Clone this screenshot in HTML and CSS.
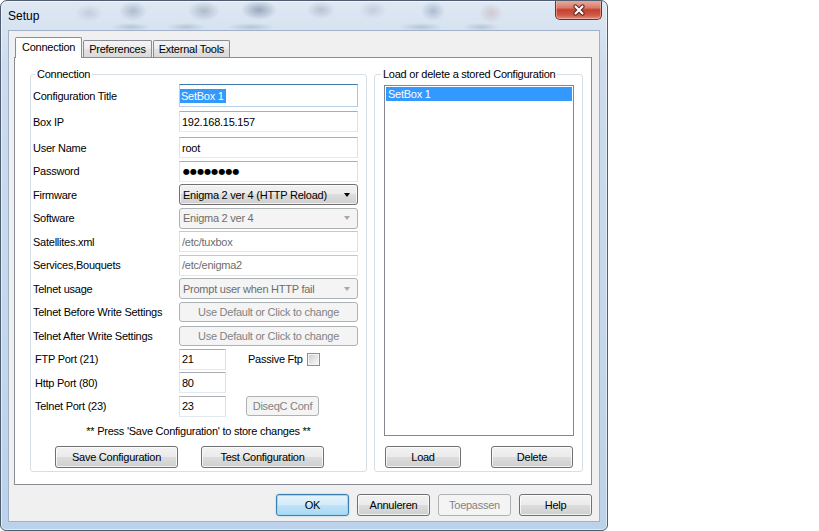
FILE: index.html
```html
<!DOCTYPE html>
<html lang="en">
<head>
    <meta charset="UTF-8">
    <meta name="viewport" content="width=device-width, initial-scale=1.0">
    <title>Setup</title>
    <link rel="stylesheet" href="styles.css">
</head>
<body>
    <div class="window">
        <div class="titlebar">
            <span class="title">Setup</span>
            <div class="close-btn">
                <svg width="14" height="12" viewBox="0 0 14 12">
                    <path d="M3.5 2.5 L10.5 9.5 M10.5 2.5 L3.5 9.5" stroke="#5a2620" stroke-width="4.2" stroke-linecap="round"/>
                    <path d="M3.5 2.5 L10.5 9.5 M10.5 2.5 L3.5 9.5" stroke="#fff" stroke-width="2.2" stroke-linecap="round"/>
                </svg>
            </div>
        </div>

        <div class="client">
            <div class="tabs">
                <div class="tab active">Connection</div>
                <div class="tab">Preferences</div>
                <div class="tab">External Tools</div>
            </div>

            <div class="tab-panel">
                <!-- left: connection settings -->
                <fieldset class="group group-left">
                    <legend>Connection</legend>

                    <div class="row row-first">
                        <label>Configuration Title</label>
                        <div class="textbox focused"><span class="sel">SetBox 1</span></div>
                    </div>
                    <div class="row row-second">
                        <label>Box IP</label>
                        <div class="textbox">192.168.15.157</div>
                    </div>
                    <div class="row">
                        <label>User Name</label>
                        <div class="textbox">root</div>
                    </div>
                    <div class="row">
                        <label>Password</label>
                        <div class="textbox password">●●●●●●●●</div>
                    </div>
                    <div class="row">
                        <label>Firmware</label>
                        <div class="combo">Enigma 2 ver 4 (HTTP Reload)</div>
                    </div>
                    <div class="row">
                        <label>Software</label>
                        <div class="combo disabled">Enigma 2 ver 4</div>
                    </div>
                    <div class="row">
                        <label>Satellites.xml</label>
                        <div class="textbox disabled">/etc/tuxbox</div>
                    </div>
                    <div class="row">
                        <label>Services,Bouquets</label>
                        <div class="textbox disabled">/etc/enigma2</div>
                    </div>
                    <div class="row">
                        <label>Telnet usage</label>
                        <div class="combo disabled">Prompt user when HTTP fail</div>
                    </div>
                    <div class="row">
                        <label>Telnet Before Write Settings</label>
                        <div class="btn disabled wide">Use Default or Click to change</div>
                    </div>
                    <div class="row">
                        <label>Telnet After Write Settings</label>
                        <div class="btn disabled wide">Use Default or Click to change</div>
                    </div>
                    <div class="row">
                        <label class="port-label">FTP Port (21)</label>
                        <div class="textbox port">21</div>
                        <span class="passive">Passive Ftp</span>
                        <span class="checkbox"></span>
                    </div>
                    <div class="row">
                        <label class="port-label">Http Port (80)</label>
                        <div class="textbox port">80</div>
                    </div>
                    <div class="row">
                        <label class="port-label">Telnet Port (23)</label>
                        <div class="textbox port">23</div>
                        <div class="btn disabled diseqc">DiseqC Conf</div>
                    </div>

                    <p class="note">** Press 'Save Configuration' to store changes **</p>

                    <div class="group-buttons">
                        <div class="btn cfg-btn">Save Configuration</div>
                        <div class="btn cfg-btn">Test Configuration</div>
                    </div>
                </fieldset>

                <!-- right: stored configurations -->
                <fieldset class="group group-right">
                    <legend>Load or delete a stored Configuration</legend>
                    <div class="listbox">
                        <div class="list-item selected">SetBox 1</div>
                    </div>
                    <div class="list-buttons">
                        <div class="btn load-btn">Load</div>
                        <div class="btn delete-btn">Delete</div>
                    </div>
                </fieldset>
            </div>

            <div class="footer">
                <div class="btn dlg-btn default">OK</div>
                <div class="btn dlg-btn">Annuleren</div>
                <div class="btn dlg-btn disabled">Toepassen</div>
                <div class="btn dlg-btn">Help</div>
            </div>
        </div>
    </div>
</body>
</html>
```

FILE: styles.css
```css
body {
    margin: 0;
    background: #fff;
    font-family: "Liberation Sans", Arial, sans-serif;
    font-size: 11px;
    letter-spacing: -0.25px;
    color: #000;
}
.window {
    width: 608px;
    height: 531px;
    box-sizing: border-box;
    border: 1px solid #4f5d70;
    border-radius: 7px 7px 6px 6px;
    overflow: hidden;
    display: flex;
    flex-direction: column;
    background:
        radial-gradient(ellipse 14px 9px at 88px 12px, rgba(120, 135, 160, 0.25), transparent),
        radial-gradient(ellipse 14px 10px at 132px 10px, rgba(90, 110, 140, 0.35), transparent),
        radial-gradient(ellipse 16px 10px at 203px 10px, rgba(90, 105, 130, 0.35), transparent),
        radial-gradient(ellipse 18px 10px at 258px 9px, rgba(70, 90, 125, 0.45), transparent),
        radial-gradient(ellipse 14px 9px at 320px 9px, rgba(100, 115, 140, 0.3), transparent),
        radial-gradient(ellipse 14px 9px at 372px 9px, rgba(120, 135, 160, 0.25), transparent),
        radial-gradient(ellipse 12px 10px at 432px 10px, rgba(80, 110, 150, 0.35), transparent),
        radial-gradient(ellipse 12px 10px at 490px 12px, rgba(170, 110, 110, 0.25), transparent),
        radial-gradient(ellipse 20px 4px at 130px 26px, rgba(90, 105, 130, 0.25), transparent),
        radial-gradient(ellipse 20px 4px at 185px 26px, rgba(90, 105, 130, 0.25), transparent),
        radial-gradient(ellipse 24px 4px at 250px 26px, rgba(90, 105, 130, 0.25), transparent),
        radial-gradient(ellipse 22px 4px at 420px 26px, rgba(90, 105, 130, 0.25), transparent),
        radial-gradient(ellipse 18px 4px at 480px 26px, rgba(90, 105, 130, 0.25), transparent),
        linear-gradient(#dfe8f3, #cddcee 12%, #c4d7ec 60%, #bcd2ea);
    box-shadow: inset 0 0 0 1px rgba(255, 255, 255, 0.55);
}
.titlebar {
    flex: none;
    height: 29px;
    display: flex;
}
.title {
    font-size: 12px;
    letter-spacing: 0;
    padding: 8px 0 0 7px;
}
.close-btn {
    margin: -1px 5px 0 auto;
    width: 47px;
    height: 20px;
    box-sizing: border-box;
    border: 1px solid #6e3029;
    border-top: none;
    border-radius: 0 0 5px 5px;
    background: linear-gradient(#eab0a4, #d97d6c 40%, #c4412f 52%, #cf5a47 80%, #e0907e);
    box-shadow: inset 0 0 0 1px rgba(255, 210, 200, 0.45);
    display: flex;
    align-items: center;
    justify-content: center;
}
.client {
    flex: none;
    margin: 0 7px;
    height: 492px;
    box-sizing: border-box;
    border: 1px solid #9fb1c6;
    background: #f0f0f0;
    padding: 6px 7px 0 5px;
}

/* tabs */
.tabs {
    height: 20px;
    display: flex;
    align-items: flex-end;
    gap: 1px;
    margin-left: 1px;
}
.tab {
    height: 17px;
    line-height: 16px;
    box-sizing: border-box;
    padding: 0 5px;
    border: 1px solid #898c95;
    border-bottom: none;
    border-radius: 2px 2px 0 0;
    background: linear-gradient(#f4f4f4, #ececec 50%, #e2e2e2 51%, #dadada);
}
.tab.active {
    height: 21px;
    line-height: 19px;
    margin-bottom: -1px;
    padding: 0 6px;
    background: #fff;
    position: relative;
    z-index: 1;
}
.tab-panel {
    height: 428px;
    box-sizing: border-box;
    border: 1px solid #898c95;
    background: #fff;
    padding: 10px 8px 12px 15px;
    display: flex;
    gap: 7px;
}

/* group boxes */
.group {
    margin: 0;
    min-inline-size: 0;
    box-sizing: border-box;
    border: 1px solid #d5dfe5;
    border-radius: 3px;
}
.group legend {
    line-height: 13px;
    padding: 0 2px;
}
.group-left {
    width: 337px;
    padding: 3px 2px 0 2px;
}
.group-left legend {
    margin-left: 2px;
}
.group-right {
    width: 209px;
    padding: 4px 9px 0 9px;
}
.group-right legend {
    margin-left: -3px;
}

/* form rows */
.row {
    display: flex;
    align-items: center;
    height: 21px;
    margin-bottom: 2.5px;
}
.row-first {
    height: 23px;
    margin-bottom: 4px;
}
.row-second {
    margin-bottom: 5px;
}
.row label {
    flex: none;
    width: 146px;
}
.row .port-label {
    padding-left: 2px;
    box-sizing: border-box;
}
.textbox {
    width: 179px;
    height: 100%;
    box-sizing: border-box;
    border: 1px solid;
    border-color: #abadb3 #dbdfe6 #e3e9ef #e2e3ea;
    background: #fff;
    padding-left: 2px;
    display: flex;
    align-items: center;
}
.textbox.focused {
    border-color: #3d7bad #a4c9e3 #b5cfe7 #b5cfe7;
    padding-left: 0;
}
.textbox .sel {
    background: #3399ff;
    color: #fff;
    padding: 1px 2px 1px 1px;
}
.textbox.password {
    font-family: "DejaVu Sans", sans-serif;
    font-size: 8px;
    letter-spacing: 0.1px;
    padding-left: 3px;
}
.textbox.disabled {
    color: #6d6d6d;
    border-color: #c3c6cb #dde1e6 #e3e6ea #dde1e6;
}
.textbox.port {
    width: 47px;
}
.combo {
    width: 179px;
    height: 100%;
    box-sizing: border-box;
    border: 1px solid #707070;
    border-radius: 3px;
    background: linear-gradient(#f2f2f2, #ebebeb 49%, #dddddd 50%, #cfcfcf);
    box-shadow: inset 0 0 0 1px rgba(255, 255, 255, 0.7);
    padding-left: 3px;
    display: flex;
    align-items: center;
}
.combo::after {
    content: "";
    margin: 0 7px 0 auto;
    border-left: 3.5px solid transparent;
    border-right: 3.5px solid transparent;
    border-top: 4px solid #000;
}
.combo.disabled {
    color: #6d6d6d;
    border-color: #adb2b5;
    background: #f4f4f4;
    box-shadow: none;
}
.combo.disabled::after {
    border-top-color: #a8a8a8;
}

/* buttons */
.btn {
    box-sizing: border-box;
    height: 22px;
    border: 1px solid #707070;
    border-radius: 3px;
    background: linear-gradient(#f2f2f2, #ebebeb 49%, #dddddd 50%, #cfcfcf);
    box-shadow: inset 0 0 0 1px rgba(255, 255, 255, 0.75);
    display: flex;
    align-items: center;
    justify-content: center;
}
.btn.disabled {
    color: #838383;
    border-color: #adb2b5;
    background: #f4f4f4;
    box-shadow: none;
}
.btn.default {
    border-color: #3c7fb1;
    background: linear-gradient(#e5f4fc, #d3ecfa 49%, #c0e3f8 50%, #a9d8f4);
    box-shadow: inset 0 0 0 1px #9cd8f7, 0 0 2px rgba(60, 140, 200, 0.4);
}
.btn.wide {
    width: 179px;
    height: 20px;
}
.btn.diseqc {
    width: 73px;
    height: 20px;
    margin-left: 20px;
}
.passive {
    margin-left: 22px;
}
.checkbox {
    width: 13px;
    height: 13px;
    margin-left: 4px;
    box-sizing: border-box;
    border: 1px solid #8e8f8f;
    background: linear-gradient(135deg, #c9ccd2, #eeeeee 70%, #f8f8f8);
    box-shadow: inset 0 0 0 1px #f4f4f4;
}
.note {
    margin: 8px 0 0;
    line-height: 13px;
    text-align: center;
}
.group-buttons {
    display: flex;
    gap: 23px;
    padding-left: 22px;
    margin-top: 8px;
}
.cfg-btn {
    width: 123px;
}

/* stored configurations list */
.listbox {
    width: 190px;
    height: 351px;
    box-sizing: border-box;
    border: 1px solid #828790;
    background: #fff;
    padding: 1px;
}
.list-item {
    height: 14px;
    line-height: 14px;
    padding-left: 2px;
}
.list-item.selected {
    background: #3399ff;
    color: #fff;
}
.list-buttons {
    display: flex;
    margin-top: 10px;
    padding-left: 1px;
    gap: 30px;
}
.load-btn {
    width: 77px;
}
.delete-btn {
    width: 83px;
}

/* dialog buttons */
.footer {
    display: flex;
    justify-content: flex-end;
    gap: 8px;
    margin-top: 9px;
}
.dlg-btn {
    width: 73px;
}
```
